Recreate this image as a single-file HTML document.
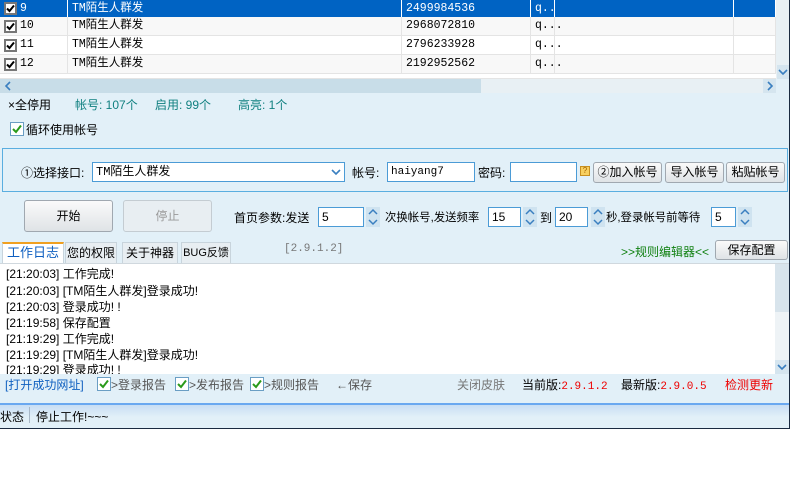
<!DOCTYPE html>
<html><head><meta charset="utf-8"><style>
*{box-sizing:border-box;margin:0;padding:0}
body{width:795px;height:480px;background:#fff;font-family:"Liberation Sans","Noto Sans CJK SC","WenQuanYi Zen Hei",sans-serif;font-size:12px;color:#000;position:relative;overflow:hidden}
.a{position:absolute;white-space:nowrap}
.win{position:absolute;left:0;top:0;width:790px;height:429px;background:#e2f0f8;border-right:1px solid #1a2a40;border-bottom:1px solid #1a2a40}
.row{position:absolute;left:0;width:776px;height:19px;border-bottom:1px solid #e4e4e4;background:#fff}
.row.alt{background:#f8f8f8}
.row.sel{background:#0063c3;color:#fff}
.cell{position:absolute;top:0;height:19px;line-height:18px;border-right:1px solid #e4e4e4;padding-left:4px;font-family:"Liberation Mono","WenQuanYi Zen Hei",monospace;font-size:11.5px;overflow:hidden}
.sel .cell{border-right-color:#fff}
.cb{position:absolute;width:13px;height:13px;border:2px solid #777;background:#fff}
.gcb{position:absolute;width:14px;height:14px;border:1px solid #6a9ec4;background:#fff}
.cb svg,.gcb svg{position:absolute;left:0;top:0}
.inp{position:absolute;height:20px;border:1px solid #4b9bd6;background:#fff;line-height:18px;padding-left:3px;font-size:12px}
.btn{position:absolute;border:1px solid #a0a8b0;border-radius:3px;background:linear-gradient(#fafafa,#dfe3e6);text-align:center;font-size:12px}
.spin{position:absolute;width:14px;height:20px;background:#cfe3f0}
.tab{position:absolute;top:242px;height:21px;border:1px solid #c8d4dc;border-bottom:none;background:#e8eef2;font-size:12px;line-height:20px;text-align:center;white-space:nowrap}
.log{position:absolute;left:6px;font-size:12px;white-space:nowrap}
.lb{font-size:12px}
</style></head><body>
<div class="win"></div>
<div class="row sel" style="top:0"><div class="cell" style="left:0;width:68px;padding-left:20px">9</div><div class="cell" style="left:68px;width:334px">TM陌生人群发</div><div class="cell" style="left:402px;width:129px">2499984536</div><div class="cell" style="left:531px;width:24px">q..</div><div class="cell" style="left:555px;width:179px"></div><div class="cell" style="left:734px;width:42px"></div></div>
<div class="row alt" style="top:17px"><div class="cell" style="left:0;width:68px;padding-left:20px">10</div><div class="cell" style="left:68px;width:334px">TM陌生人群发</div><div class="cell" style="left:402px;width:129px">2968072810</div><div class="cell" style="left:531px;width:24px;overflow:visible">q...</div><div class="cell" style="left:555px;width:179px"></div><div class="cell" style="left:734px;width:42px"></div></div>
<div class="row" style="top:36px"><div class="cell" style="left:0;width:68px;padding-left:20px">11</div><div class="cell" style="left:68px;width:334px">TM陌生人群发</div><div class="cell" style="left:402px;width:129px">2796233928</div><div class="cell" style="left:531px;width:24px;overflow:visible">q...</div><div class="cell" style="left:555px;width:179px"></div><div class="cell" style="left:734px;width:42px"></div></div>
<div class="row alt" style="top:55px"><div class="cell" style="left:0;width:68px;padding-left:20px">12</div><div class="cell" style="left:68px;width:334px">TM陌生人群发</div><div class="cell" style="left:402px;width:129px">2192952562</div><div class="cell" style="left:531px;width:24px;overflow:visible">q...</div><div class="cell" style="left:555px;width:179px"></div><div class="cell" style="left:734px;width:42px"></div></div>
<div class="row" style="top:74px;height:5px"></div>
<div class="cb" style="left:4px;top:2px"><svg width="9" height="9"><path d="M1 4.5L3.5 7L8 1.5" stroke="#000" stroke-width="2" fill="none"/></svg></div>
<div class="cb" style="left:4px;top:20px"><svg width="9" height="9"><path d="M1 4.5L3.5 7L8 1.5" stroke="#000" stroke-width="2" fill="none"/></svg></div>
<div class="cb" style="left:4px;top:39px"><svg width="9" height="9"><path d="M1 4.5L3.5 7L8 1.5" stroke="#000" stroke-width="2" fill="none"/></svg></div>
<div class="cb" style="left:4px;top:58px"><svg width="9" height="9"><path d="M1 4.5L3.5 7L8 1.5" stroke="#000" stroke-width="2" fill="none"/></svg></div>
<div class="a" style="left:776px;top:0;width:13px;height:79px;background:#e8f0f4"></div>
<div class="a" style="left:777px;top:65px;width:12px;height:14px;background:#d5e5ef"><svg width="12" height="14"><path d="M2 5L6 9L10 5" stroke="#3a7fc0" stroke-width="1.6" fill="none"/></svg></div>
<div class="a" style="left:0;top:79px;width:776px;height:14px;background:#e8f0f4"></div>
<div class="a" style="left:0;top:79px;width:481px;height:14px;background:#c8dde8"></div>
<div class="a" style="left:3px;top:79px"><svg width="10" height="14"><path d="M7 3L3 7L7 11" stroke="#3a7fc0" stroke-width="1.6" fill="none"/></svg></div>
<div class="a" style="left:763px;top:79px;width:13px;height:14px;background:#d5e5ef"><svg width="13" height="14"><path d="M5 3L9 7L5 11" stroke="#3a7fc0" stroke-width="1.6" fill="none"/></svg></div>
<div class="a" style="left:8px;top:96px">×全停用</div>
<div class="a" style="left:75px;top:96px;color:#108080">帐号: 107个</div>
<div class="a" style="left:155px;top:96px;color:#108080">启用: 99个</div>
<div class="a" style="left:238px;top:96px;color:#108080">高亮: 1个</div>
<div class="gcb" style="left:10px;top:122px"><svg width="12" height="12"><path d="M2 6L5 9L10 2.5" stroke="#2a9a1a" stroke-width="2" fill="none"/></svg></div>
<div class="a" style="left:26px;top:121px">循环使用帐号</div>
<div class="a" style="left:2px;top:148px;width:786px;height:44px;border:1px solid #5aaee0"></div>
<div class="a" style="left:21px;top:164px">①选择接口:</div>
<div class="inp" style="left:92px;top:162px;width:253px;font-family:'Liberation Mono','WenQuanYi Zen Hei',monospace">TM陌生人群发<svg style="position:absolute;right:3px;top:4px" width="10" height="10"><path d="M1 3L5 7L9 3" stroke="#3a7fc0" stroke-width="1.6" fill="none"/></svg></div>
<div class="a" style="left:352px;top:164px">帐号:</div>
<div class="inp" style="left:387px;top:162px;width:88px;font-family:'Liberation Mono',monospace;font-size:11px">haiyang7</div>
<div class="a" style="left:478px;top:164px">密码:</div>
<div class="inp" style="left:510px;top:162px;width:67px"></div>
<div class="a" style="left:580px;top:166px;width:10px;height:10px;background:#f8d060;border:1px solid #c89020;font-size:8px;line-height:8px;text-align:center;color:#a06000">?</div>
<div class="btn" style="left:593px;top:162px;width:69px;height:21px;line-height:19px">②加入帐号</div>
<div class="btn" style="left:665px;top:162px;width:59px;height:21px;line-height:19px">导入帐号</div>
<div class="btn" style="left:726px;top:162px;width:59px;height:21px;line-height:19px">粘贴帐号</div>
<div class="btn" style="left:24px;top:200px;width:89px;height:32px;line-height:30px">开始</div>
<div class="btn" style="left:123px;top:200px;width:89px;height:32px;line-height:30px;color:#999;background:#e8eef2;border-color:#c4ccd2">停止</div>
<div class="a" style="left:234px;top:209px">首页参数:发送</div>
<div class="inp" style="left:318px;top:207px;width:46px">5</div>
<div class="a" style="left:385px;top:209px;font-size:11.4px">次换帐号,发送频率</div>
<div class="inp" style="left:488px;top:207px;width:33px">15</div>
<div class="a" style="left:540px;top:209px">到</div>
<div class="inp" style="left:555px;top:207px;width:33px">20</div>
<div class="a" style="left:606px;top:209px;font-size:11.4px">秒,登录帐号前等待</div>
<div class="inp" style="left:711px;top:207px;width:25px">5</div>
<div class="spin" style="left:366px;top:207px"><svg width="14" height="20"><path d="M3 7L7 3L11 7M3 13L7 17L11 13" stroke="#3a7fc0" stroke-width="1.5" fill="none"/></svg></div>
<div class="spin" style="left:523px;top:207px"><svg width="14" height="20"><path d="M3 7L7 3L11 7M3 13L7 17L11 13" stroke="#3a7fc0" stroke-width="1.5" fill="none"/></svg></div>
<div class="spin" style="left:591px;top:207px"><svg width="14" height="20"><path d="M3 7L7 3L11 7M3 13L7 17L11 13" stroke="#3a7fc0" stroke-width="1.5" fill="none"/></svg></div>
<div class="spin" style="left:738px;top:207px"><svg width="14" height="20"><path d="M3 7L7 3L11 7M3 13L7 17L11 13" stroke="#3a7fc0" stroke-width="1.5" fill="none"/></svg></div>
<div class="tab" style="left:2px;width:62px;background:#fff;border-top:2px solid #f0a020;color:#1060c0;font-size:13px;line-height:18px">工作日志</div>
<div class="tab" style="left:65px;width:52px">您的权限</div>
<div class="tab" style="left:122px;width:56px">关于神器</div>
<div class="tab" style="left:181px;width:50px;font-size:11px">BUG反馈</div>
<div class="a" style="left:284px;top:243px;color:#777;font-family:'Liberation Mono',monospace;font-size:11px">[2.9.1.2]</div>
<div class="a" style="left:621px;top:243px;color:#108010">&gt;&gt;规则编辑器&lt;&lt;</div>
<div class="btn" style="left:715px;top:240px;width:73px;height:20px;line-height:18px">保存配置</div>
<div class="a" style="left:0;top:263px;width:789px;height:111px;background:#fff;border-top:1px solid #d0d8de"></div>
<div class="a" style="left:775px;top:264px;width:14px;height:110px;background:#eef3f6"></div>
<div class="a" style="left:775px;top:264px;width:14px;height:48px;background:#d8e4ec"></div>
<div class="a" style="left:775px;top:360px;width:14px;height:14px;background:#d5e5ef"><svg width="14" height="14"><path d="M3 5L7 9L11 5" stroke="#3a7fc0" stroke-width="1.6" fill="none"/></svg></div>
<div class="log" style="top:265px">[21:20:03] 工作完成!</div>
<div class="log" style="top:282px">[21:20:03] [TM陌生人群发]登录成功!</div>
<div class="log" style="top:298px">[21:20:03] 登录成功! !</div>
<div class="log" style="top:314px">[21:19:58] 保存配置</div>
<div class="log" style="top:330px">[21:19:29] 工作完成!</div>
<div class="log" style="top:346px">[21:19:29] [TM陌生人群发]登录成功!</div>
<div class="log" style="top:361px;height:13px;overflow:hidden">[21:19:29] 登录成功! !</div>
<div class="a" style="left:5px;top:376px;color:#1060c0">[打开成功网址]</div>
<div class="gcb" style="left:97px;top:377px"><svg width="12" height="12"><path d="M2 6L5 9L10 2.5" stroke="#2a9a1a" stroke-width="2" fill="none"/></svg></div><div class="a" style="left:111px;top:376px;color:#555">&gt;登录报告</div>
<div class="gcb" style="left:175px;top:377px"><svg width="12" height="12"><path d="M2 6L5 9L10 2.5" stroke="#2a9a1a" stroke-width="2" fill="none"/></svg></div><div class="a" style="left:189px;top:376px;color:#555">&gt;发布报告</div>
<div class="gcb" style="left:250px;top:377px"><svg width="12" height="12"><path d="M2 6L5 9L10 2.5" stroke="#2a9a1a" stroke-width="2" fill="none"/></svg></div><div class="a" style="left:264px;top:376px;color:#555">&gt;规则报告</div>
<div class="a" style="left:336px;top:376px;color:#555">←保存</div>
<div class="a" style="left:457px;top:376px;color:#777">关闭皮肤</div>
<div class="a" style="left:522px;top:376px">当前版:<span style="color:#e00;font-family:'Liberation Mono',monospace;font-size:11px">2.9.1.2</span></div>
<div class="a" style="left:621px;top:376px">最新版:<span style="color:#e00;font-family:'Liberation Mono',monospace;font-size:11px">2.9.0.5</span></div>
<div class="a" style="left:725px;top:376px;color:#e00">检测更新</div>
<div class="a" style="left:0;top:403px;width:789px;height:2px;background:#6aa8f0"></div>
<div class="a" style="left:0;top:405px;width:789px;height:12px;background:linear-gradient(#c8ddf4,#e2f0f8)"></div>
<div class="a" style="left:0;top:408px">状态</div>
<div class="a" style="left:29px;top:407px;width:1px;height:16px;background:#a8b8c8"></div>
<div class="a" style="left:36px;top:408px">停止工作!~~~</div>
</body></html>
